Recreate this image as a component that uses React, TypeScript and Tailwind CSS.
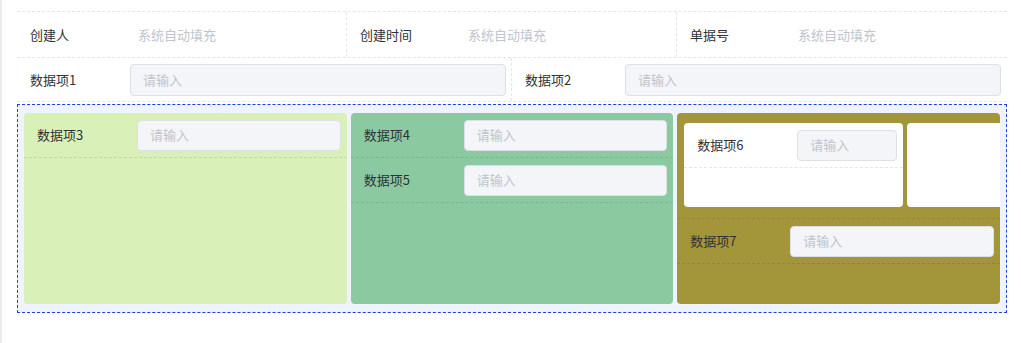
import cn from "clsx";

const font = { fontFamily: '"Noto Sans CJK SC", "Noto Sans", sans-serif' };

type FieldProps = {
  label: string;
  className?: string;
};

function Field(props: FieldProps) {
  return (
    <div
      className={cn(
        "flex items-center h-[45px] border-b border-dashed border-black/10 pl-[13px] pr-[6px]",
        props.className
      )}
    >
      <span className="w-[100px] shrink-0 text-[#303133]">{props.label}</span>
      <div className="flex-1 min-w-0 h-[31px] rounded border border-[#dcdfe6] bg-[#f4f5f9] pl-3 flex items-center text-[#c0c4cc]">
        请输入
      </div>
    </div>
  );
}

function AutoCell(props: { label: string; last?: boolean }) {
  return (
    <div
      className={cn("flex items-center h-[45px] pl-[13px]", {
        "border-r border-dashed border-black/10": !props.last,
      })}
    >
      <span className="w-[108px] shrink-0 text-[#303133]">{props.label}</span>
      <span className="text-[#c0c4cc]">系统自动填充</span>
    </div>
  );
}

export default function App() {
  return (
    <div
      className="w-[1021px] h-[343px] bg-white border-l-2 border-[#ebebeb] pl-[15px] pr-[14px] pt-[11px] text-[13px] leading-5"
      style={font}
    >
      <div className="border-t border-dashed border-black/10">
        <div className="grid grid-cols-3 border-b border-dashed border-black/10">
          <AutoCell label="创建人" />
          <AutoCell label="创建时间" />
          <AutoCell label="单据号" last />
        </div>
        <div className="grid grid-cols-2 border-b border-dashed border-black/10">
          <div className="flex items-center h-[43px] pl-[13px] pr-[5px] border-r border-dashed border-black/10">
            <span className="w-[100px] shrink-0 text-[#303133]">数据项1</span>
            <div className="flex-1 h-[32px] rounded border border-[#dcdfe6] bg-[#f4f5f9] pl-3 flex items-center text-[#c0c4cc]">
              请输入
            </div>
          </div>
          <div className="flex items-center h-[43px] pl-[13px] pr-[6px]">
            <span className="w-[100px] shrink-0 text-[#303133]">数据项2</span>
            <div className="flex-1 h-[32px] rounded border border-[#dcdfe6] bg-[#f4f5f9] pl-3 flex items-center text-[#c0c4cc]">
              请输入
            </div>
          </div>
        </div>
      </div>

      {/* nested layout container */}
      <div className="mt-[2px] border border-dashed border-[#1f3fe0] bg-[#eff3fd] px-[6px] py-[8px] grid grid-cols-3 gap-1">
        <div className="h-[191px] rounded bg-[#d9f0b9] overflow-hidden">
          <Field label="数据项3" />
        </div>
        <div className="h-[191px] rounded bg-[#8bcaa1] overflow-hidden">
          <Field label="数据项4" />
          <Field label="数据项5" />
        </div>
        <div className="h-[191px] rounded bg-[#a39539] overflow-hidden">
          <div className="flex gap-1 px-[7px] pt-[10px] pb-[11px] border-b border-dashed border-black/10">
            <div className="w-[219px] h-[84px] shrink-0 rounded bg-white overflow-hidden">
              <Field label="数据项6" className="pr-[5px]" />
            </div>
            <div className="w-[219px] h-[84px] shrink-0 rounded bg-white" />
          </div>
          <Field label="数据项7" />
        </div>
      </div>
    </div>
  );
}
